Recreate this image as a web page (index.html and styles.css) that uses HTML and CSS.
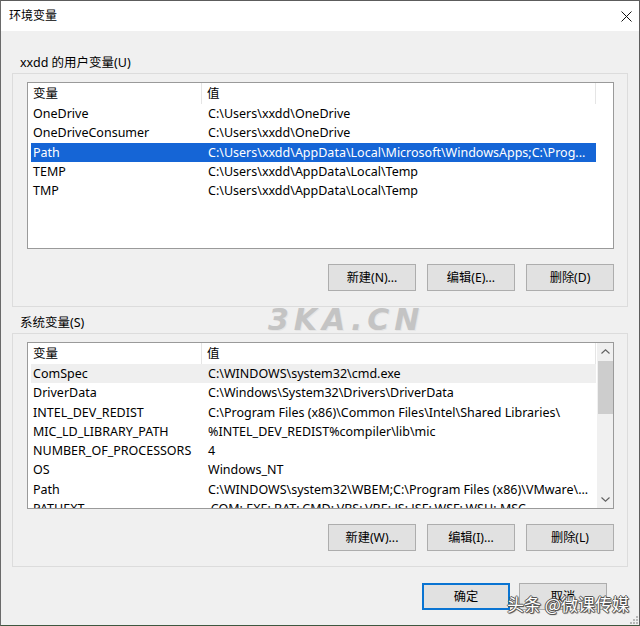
FILE: index.html
```html
<!DOCTYPE html>
<html lang="zh-CN">
<head>
<meta charset="utf-8">
<title>环境变量</title>
<link rel="stylesheet" href="styles.css">
</head>
<body>
<div class="window">
  <div class="titlebar">
    <span class="title">环境变量</span>
    <svg class="close" width="11" height="11" viewBox="0 0 11 11"><path d="M0.5 0.5L10.5 10.5M10.5 0.5L0.5 10.5" stroke="#111" stroke-width="1" fill="none"/></svg>
  </div>
  <div class="content">
    <div class="group-label first">xxdd 的用户变量(U)</div>
    <div class="group">
      <div class="list">
        <div class="rows">
          <div class="row head"><div class="c1">变量</div><div class="c2">值</div></div>
          <div class="row"><div class="c1">OneDrive</div><div class="c2">C:\Users\xxdd\OneDrive</div></div>
          <div class="row"><div class="c1">OneDriveConsumer</div><div class="c2">C:\Users\xxdd\OneDrive</div></div>
          <div class="row selected"><div class="c1">Path</div><div class="c2">C:\Users\xxdd\AppData\Local\Microsoft\WindowsApps;C:\Prog...</div></div>
          <div class="row"><div class="c1">TEMP</div><div class="c2">C:\Users\xxdd\AppData\Local\Temp</div></div>
          <div class="row"><div class="c1">TMP</div><div class="c2">C:\Users\xxdd\AppData\Local\Temp</div></div>
        </div>
      </div>
      <div class="buttons">
        <button class="btn">新建(N)...</button>
        <button class="btn">编辑(E)...</button>
        <button class="btn">删除(D)</button>
      </div>
    </div>

    <div class="group-label second">系统变量(S)</div>
    <div class="group">
      <div class="list">
        <div class="rows">
          <div class="row head"><div class="c1">变量</div><div class="c2">值</div></div>
          <div class="row hover"><div class="c1">ComSpec</div><div class="c2">C:\WINDOWS\system32\cmd.exe</div></div>
          <div class="row"><div class="c1">DriverData</div><div class="c2">C:\Windows\System32\Drivers\DriverData</div></div>
          <div class="row"><div class="c1">INTEL_DEV_REDIST</div><div class="c2">C:\Program Files (x86)\Common Files\Intel\Shared Libraries\</div></div>
          <div class="row"><div class="c1">MIC_LD_LIBRARY_PATH</div><div class="c2">%INTEL_DEV_REDIST%compiler\lib\mic</div></div>
          <div class="row"><div class="c1">NUMBER_OF_PROCESSORS</div><div class="c2">4</div></div>
          <div class="row"><div class="c1">OS</div><div class="c2">Windows_NT</div></div>
          <div class="row"><div class="c1">Path</div><div class="c2">C:\WINDOWS\system32\WBEM;C:\Program Files (x86)\VMware\...</div></div>
          <div class="row"><div class="c1">PATHEXT</div><div class="c2">.COM;.EXE;.BAT;.CMD;.VBS;.VBE;.JS;.JSE;.WSF;.WSH;.MSC</div></div>
        </div>
        <div class="scrollbar">
          <div class="sb-btn"><svg width="9" height="5" viewBox="0 0 9 5"><path d="M0.5 4.5L4.5 0.8L8.5 4.5" stroke="#606060" stroke-width="1.1" fill="none"/></svg></div>
          <div class="sb-thumb"></div>
          <div class="sb-track"></div>
          <div class="sb-btn"><svg width="9" height="5" viewBox="0 0 9 5"><path d="M0.5 0.5L4.5 4.2L8.5 0.5" stroke="#606060" stroke-width="1.1" fill="none"/></svg></div>
        </div>
      </div>
      <div class="buttons">
        <button class="btn">新建(W)...</button>
        <button class="btn">编辑(I)...</button>
        <button class="btn">删除(L)</button>
      </div>
    </div>
  </div>
  <div class="footer">
    <button class="btn default">确定</button>
    <button class="btn">取消</button>
  </div>

  <div class="wm-site">3KA.CN</div>
  <div class="wm-author">头条 @微课传媒</div>
  <svg class="grip" width="8" height="8" viewBox="0 0 8 8">
    <rect x="6" y="0" width="2" height="2" fill="#b8b8b8"/>
    <rect x="3" y="3" width="2" height="2" fill="#b8b8b8"/>
    <rect x="6" y="3" width="2" height="2" fill="#b8b8b8"/>
    <rect x="0" y="6" width="2" height="2" fill="#b8b8b8"/>
    <rect x="3" y="6" width="2" height="2" fill="#b8b8b8"/>
    <rect x="6" y="6" width="2" height="2" fill="#b8b8b8"/>
  </svg>
</div>
</body>
</html>
```

FILE: styles.css
```css
html, body {
  margin: 0;
  padding: 0;
  background: #f0f0f0;
}
body {
  font-family: "Noto Sans", "Noto Sans CJK SC", sans-serif;
  font-size: 12.5px;
  color: #000;
}
.window {
  position: relative;
  width: 640px;
  height: 626px;
  box-sizing: border-box;
  border: 1px solid #5c5c5c;
  border-left-color: #6a6a6a;
  border-bottom-color: #3f573f;
  background: #f0f0f0;
  overflow: hidden;
  display: flex;
  flex-direction: column;
}
.titlebar {
  height: 30px;
  flex: none;
  background: #fff;
  display: flex;
  align-items: center;
  padding: 0 7px 0 8px;
}
.title {
  font-size: 12px;
  line-height: 16px;
}
.close {
  margin-left: auto;
  margin-top: 1px;
}
.content {
  padding: 0 11px 0 11px;
}
.group-label {
  line-height: 16px;
  padding-left: 8px;
  margin-bottom: 2px;
}
.group-label.first { margin-top: 24px; }
.group-label.second { margin-top: 8px; }
.group {
  border: 1px solid #dcdcdc;
  padding: 8px 13px 15px 14px;
}
.list {
  height: 167px;
  box-sizing: border-box;
  border: 1px solid #9a9a9a;
  background: #fff;
  display: flex;
  overflow: hidden;
}
.rows {
  width: 565px;
  margin-left: 3px;
  flex: none;
}
.row {
  display: flex;
  height: 19.25px;
  line-height: 19.25px;
  white-space: nowrap;
}
.row .c1 {
  width: 171px;
  flex: none;
  box-sizing: border-box;
  padding-left: 2px;
  overflow: hidden;
}
.row .c2 {
  flex: 1;
  min-width: 0;
  padding-left: 6px;
  overflow: hidden;
}
.row.head {
  height: 21px;
  line-height: 21px;
}
.row.head .c1 {
  border-right: 1px solid #e5e5e5;
}
.row.head .c2 {
  border-right: 1px solid #e5e5e5;
  padding-left: 5px;
}
.row.selected {
  background: #1565d6;
  color: #fff;
}
.row.hover {
  background: #efefef;
}
.scrollbar {
  margin-left: auto;
  width: 16px;
  background: #f0f0f0;
  display: flex;
  flex-direction: column;
}
.sb-btn {
  height: 17px;
  flex: none;
  display: flex;
  align-items: center;
  justify-content: center;
}
.sb-thumb {
  height: 53px;
  margin: 1px 0 0 1px;
  background: #cdcdcd;
  flex: none;
}
.sb-track { flex: 1; }
.buttons {
  display: flex;
  justify-content: flex-end;
  gap: 11px;
  margin-top: 15px;
}
.btn {
  width: 88px;
  height: 27px;
  box-sizing: border-box;
  padding: 0;
  background: #e1e1e1;
  border: 1px solid #adadad;
  font-family: "Noto Sans", "Noto Sans CJK SC", sans-serif;
  font-size: 12.2px;
  color: #000;
  line-height: 25px;
}
.btn.default {
  border-color: #0a74d2;
  box-shadow: inset 0 0 0 1px #0a74d2;
}
.footer {
  display: flex;
  justify-content: flex-end;
  gap: 9px;
  margin-top: 16px;
  padding-right: 32px;
}
.wm-site {
  position: absolute;
  left: 267px;
  top: 301px;
  font-family: "DejaVu Sans", sans-serif;
  font-weight: bold;
  font-style: italic;
  font-size: 30px;
  letter-spacing: 5px;
  color: #c4c4c4;
  text-shadow: 1px 1px 0 #e6e6e6;
}
.wm-author {
  position: absolute;
  left: 506px;
  top: 591px;
  font-family: "Noto Sans CJK SC", sans-serif;
  font-size: 17px;
  line-height: 24px;
  color: #fff;
  text-shadow: 1px 0 0 #555, -1px 0 0 #555, 0 1px 0 #555, 0 -1px 0 #555, 1px 1px 1px #444;
}
.grip {
  position: absolute;
  right: 1px;
  bottom: 1px;
}
```
